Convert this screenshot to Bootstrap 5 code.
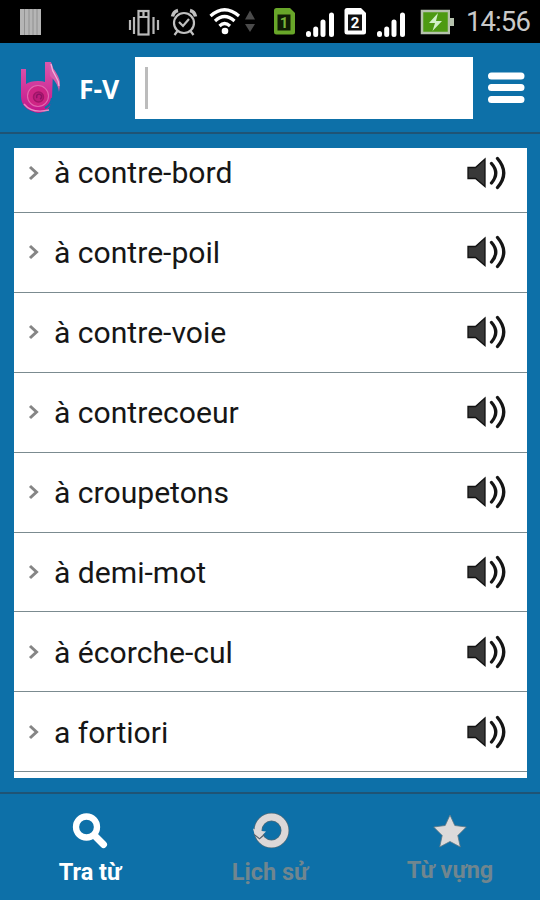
<!DOCTYPE html>
<html lang="vi">
<head>
<meta charset="utf-8">
<meta name="viewport" content="width=device-width, initial-scale=1">
<title>F-V</title>
<link href="https://cdn.jsdelivr.net/npm/bootstrap@5.3.0/dist/css/bootstrap.min.css" rel="stylesheet">
<style>
body{width:540px;height:900px;overflow:hidden;background:#0d70a8;font-family:Roboto,"Liberation Sans",sans-serif}
.screen{height:900px}
.status{height:43px;background:#000}
.clock{font-size:27.5px;line-height:43px;color:#c9c9c9;width:66px;margin-left:12px;letter-spacing:-.9px;white-space:nowrap}
.topbar{height:91px;border-bottom:2px solid #1f5475;padding:0 0 0 18px}
.lang{font:700 26.5px/1 "Open Sans",sans-serif;width:44px;margin-left:17px;padding-top:3px;letter-spacing:0}
.query{width:338px;height:62px;background:#fff;margin-left:12px;padding:10px}
.caret{width:3px;height:42px;background:#bcbcbc}
.burger{margin-left:13.500px}
.main{height:658px;padding:14px 13px 14px 14px}
.words{height:630px;background:#fff}
.word{height:79.9px;border-bottom:1.5px solid #7b8b90;padding:0 20px 0 14px;flex:none;color:#161616;font-size:30.100px;line-height:1}
.word:first-child{height:65px;padding-bottom:15px}
.term{margin-left:14px;padding-top:2px;white-space:nowrap}
.tabs{height:108px;border-top:2px solid #1f5475;padding-top:18px}
.tab{width:180px;font-weight:700;font-size:23.5px;line-height:28px;color:#70868f}
.tab.on{color:#fff}
.tab svg{margin-bottom:6px}
</style>
<script src="https://cdn.jsdelivr.net/npm/bootstrap@5.3.0/dist/js/bootstrap.bundle.min.js"></script>
</head>
<body>
<svg width="0" height="0" class="position-absolute" aria-hidden="true">
<symbol id="chev" viewBox="0 0 12 16"><path d="M2 2 8.500 8 2 14" fill="none" stroke="#858585" stroke-width="3"/></symbol>
<symbol id="sound" viewBox="0 0 40 36"><path d="M1 12.500H8.500L18 4V31.500L8.500 23.500H1Z" fill="#383838" stroke="#111" stroke-width="1.300"/><path d="M24.500 8.500Q33 18 24.500 28M30.500 3.500Q43 18 30.500 32.500" fill="none" stroke="#151515" stroke-width="3.300" stroke-linecap="round"/></symbol>
<symbol id="bars" viewBox="0 0 29 26"><path d="M2.500 21.500v1M9.700 17v5.500M17 10v12.500M25.500 3v19.500" stroke="#fff" stroke-width="5" stroke-linecap="round"/></symbol>
</svg>
<div class="screen d-flex flex-column">
<div class="status d-flex">
<svg width="450" height="43" viewBox="0 0 450 43" class="flex-shrink-0">
<rect x="20" y="9" width="21" height="26" fill="#b5b5b5"/><path d="M24.500 9v26M29 9v26M33 9v26M37 9v26" stroke="#909090"/>
<g fill="none" stroke="#b9b9b9" stroke-width="2.200"><rect x="138.500" y="11" width="10" height="23.500"/><path d="M138 17h11M143.500 11v5M134 17v17M153.500 17v17M130 20v10M158 20v10"/></g>
<g fill="none" stroke="#c0c0c0" stroke-width="2.200"><circle cx="184" cy="23" r="10"/><path d="m179 22 4 4 6-7M177.500 31l-3 4M190.500 31l3 4"/><path d="M172.500 16.500q1-5 5.500-6M195.500 16.500q-1-5-5.500-6" stroke-width="3.500"/></g>
<g fill="none" stroke="#fff" stroke-width="3.200"><path d="M210.500 16q14-12.500 28.500 0M215 21q9.500-9 19.500 0M219.500 26q5-5 10.500 0"/></g><circle cx="225" cy="31" r="3.300" fill="#fff"/>
<path d="M245 19.500l5-9 5 9zM245 24l5 8 5-8z" fill="#4b4b4b"/>
<path d="M274 10.500q0-2.500 2.500-2.500H290l5 5V32q0 2.500-2.500 2.500h-16q-2.500 0-2.500-2.500z" fill="#68a629"/><rect x="277.500" y="14.500" width="13" height="16" fill="#101c05"/>
<text x="284" y="28" text-anchor="middle" font-family="Roboto" font-size="15" font-weight="700" fill="#78b63a">1</text>
<use href="#bars" x="306" y="12" width="29" height="26"/>
<path d="M344.500 10.500q0-2.500 2.500-2.500H361l5 5V32q0 2.500-2.500 2.500H347q-2.500 0-2.500-2.500z" fill="#fff"/><rect x="348" y="14.500" width="14" height="16" fill="#111"/>
<text x="355" y="28" text-anchor="middle" font-family="Roboto" font-size="15" font-weight="700" fill="#fff">2</text>
<use href="#bars" x="377" y="12" width="29" height="26"/>
<rect x="422" y="11" width="27" height="22" fill="#4d9a12" stroke="#b5c2ad" stroke-width="2.500"/>
<path d="M438 13 429 23h6l-2.500 8L442 21h-6z" fill="#d2f0c8"/>
</svg>
<svg width="4" height="43" class="flex-shrink-0"><rect y="18" width="4" height="8" fill="#b5c2ad"/></svg>
<div class="clock">14:56</div>
</div>
<header class="topbar d-flex align-items-center">
<svg width="44" height="56" viewBox="0 0 44 56" class="flex-shrink-0">
<defs><linearGradient id="pk" x2="0" y2="1"><stop stop-color="#dc58ac"/><stop offset="1" stop-color="#c4148a"/></linearGradient></defs>
<path d="M3 9h5v15q4-3 12-3 5 0 7 1V2h6l2 8-1 28q-1 14-14 15Q3 50 3 36z" fill="url(#pk)"/>
<path d="M31 2q3 0 4 6 6 8 7 14 0 5-1 10-1-9-9-16z" fill="#d45cac"/>
<path d="M33 4q1 7 4.500 12t3.500 10" fill="none" stroke="#f0b4dc" stroke-width="1.300"/>
<circle cx="20" cy="36" r="10.500" fill="#cf2585" stroke="#e069b0" stroke-width="1.100"/>
<circle cx="20.500" cy="37" r="5" fill="#bd1c7c" stroke="#a01668" stroke-width="1.500"/><path d="M19 38a2.500 2.500 0 1 1 3 1" fill="none" stroke="#8d1265" stroke-width="1.500"/>
<path d="M6 44q8 10 25 6" fill="none" stroke="#e88cc5" stroke-width="1.300"/>
<path d="M34 38q-1 7-7 10" fill="none" stroke="#0d70a8" stroke-width="2"/>
</svg>
<div class="lang text-white text-nowrap flex-shrink-0">F-V</div>
<div class="query flex-shrink-0"><div class="caret"></div></div>
<svg class="burger flex-shrink-0" width="40" height="36" viewBox="0 0 40 36"><path d="M4.500 6h29.500M4.500 17.500h29.500M4.500 29.500h29.500" stroke="#fff" stroke-width="7" stroke-linecap="round"/></svg>
</header>
<main class="main">
<div class="words d-flex flex-column overflow-hidden" id="words"></div>
</main>
<nav class="tabs d-flex text-center">
<div class="tab on d-flex flex-column align-items-center"><svg width="40" height="40" viewBox="0 0 40 40"><circle cx="16.500" cy="15" r="10.500" fill="none" stroke="#fff" stroke-width="6.300"/><path d="M25 24l8.500 8.500" stroke="#fff" stroke-width="7" stroke-linecap="round"/></svg><span>Tra từ</span></div>
<div class="tab d-flex flex-column align-items-center"><svg width="40" height="40" viewBox="0 0 40 40"><circle cx="21.500" cy="18.500" r="13.500" fill="none" stroke="#4d6b7b" stroke-width="8.500"/><circle cx="21.500" cy="18.500" r="13.500" fill="none" stroke="#dcd8d8" stroke-width="7"/><path d="M4 22l5.500 4.500 5-4" fill="none" stroke="#56606a" stroke-width="1.500"/><path d="M3 16.500l4 2 9 1-6.500 6.500-5-4z" fill="#dcd8d8"/></svg><span>Lịch sử</span></div>
<div class="tab d-flex flex-column align-items-center"><svg width="40" height="38" viewBox="0 0 40 38"><path d="M20 3l4.800 10.500 11.500 1.500-8.500 8.500 2.500 11.500L20 29.500 9.700 35l2.500-11.500L3.700 15l11.500-1.500z" fill="#dcdada" stroke="#5d7784" stroke-width=".8"/></svg><span>Từ vựng</span></div>
</nav>
</div>
<script>
const list = ["à contre-bord","à contre-poil","à contre-voie","à contrecoeur","à croupetons","à demi-mot","à écorche-cul","a fortiori"];
document.getElementById("words").innerHTML = list.map(w => `<div class="word d-flex align-items-center"><svg width="12" height="16"><use href="#chev"/></svg><span class="term">${w}</span><svg class="ms-auto" width="40" height="36"><use href="#sound"/></svg></div>`).join("");
</script>
</body>
</html>
